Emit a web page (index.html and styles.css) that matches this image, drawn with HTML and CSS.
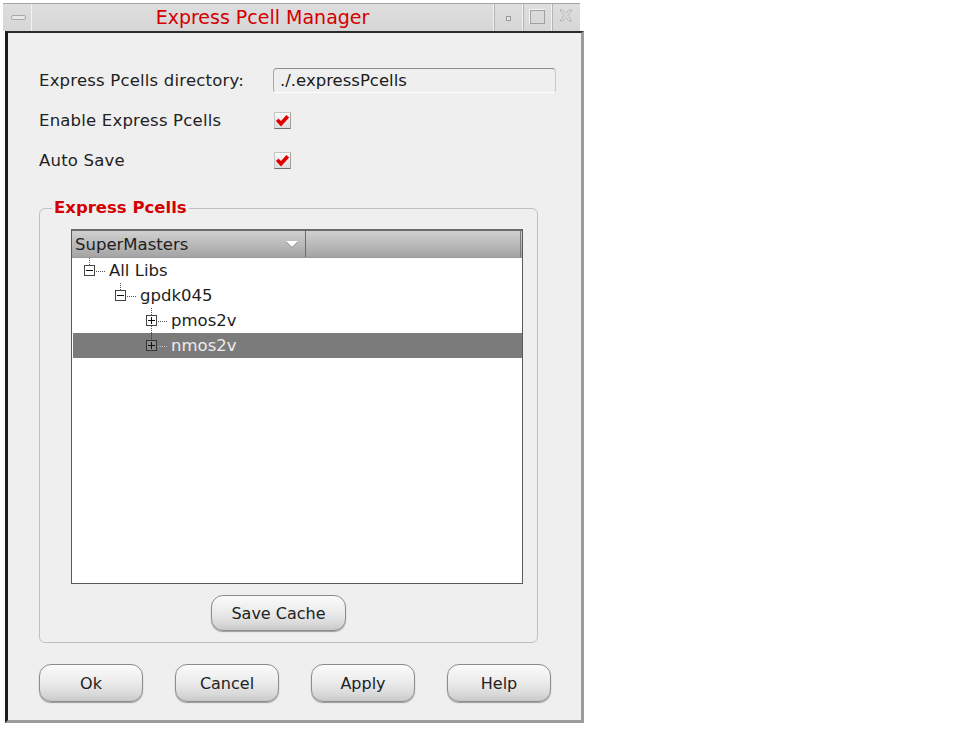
FILE: index.html
```html
<!DOCTYPE html>
<html>
<head>
<meta charset="utf-8">
<title>Express Pcell Manager</title>
<link rel="stylesheet" href="styles.css">
</head>
<body>
<div class="window">
  <div class="titlebar">
    <div class="tb-btn tb-menu">
      <svg width="28" height="27" viewBox="0 0 28 27"><rect x="8.5" y="15.5" width="14" height="4" rx="1.5" fill="#e8e8e8" stroke="#a8a8a8"/></svg>
    </div>
    <div class="title">Express Pcell Manager</div>
    <div class="tb-btn">
      <svg width="28" height="27" viewBox="0 0 28 27"><rect x="12.5" y="16.5" width="4" height="4" fill="#e4e4e4" stroke="#999"/></svg>
    </div>
    <div class="tb-btn">
      <svg width="28" height="27" viewBox="0 0 28 27"><rect x="6.5" y="9.5" width="15" height="14" fill="none" stroke="#f6f6f6" stroke-width="1"/><rect x="7.5" y="10.5" width="14" height="13" fill="none" stroke="#a0a0a0" stroke-width="1"/></svg>
    </div>
    <div class="tb-btn tb-last">
      <svg width="28" height="27" viewBox="0 0 28 27"><path d="M8 10 L11 10 L14 13.5 L17 10 L20 10 L16 15.5 L20 21 L17 21 L14 17.5 L11 21 L8 21 L12 15.5 Z" fill="none" stroke="#a8a8a8" stroke-width="1" stroke-dasharray="2 1"/></svg>
    </div>
  </div>
  <div class="client">
    <div class="form">
      <label class="lbl">Express Pcells directory:</label>
      <div class="input">./.expressPcells</div>
      <label class="lbl">Enable Express Pcells</label>
      <span class="check"><svg width="15" height="15" viewBox="0 0 15 15"><path d="M2.2 6.8 L6 10.8 L12.8 3.2" fill="none" stroke="#e00000" stroke-width="3.6" stroke-linejoin="miter"/></svg></span>
      <label class="lbl">Auto Save</label>
      <span class="check"><svg width="15" height="15" viewBox="0 0 15 15"><path d="M2.2 6.8 L6 10.8 L12.8 3.2" fill="none" stroke="#e00000" stroke-width="3.6" stroke-linejoin="miter"/></svg></span>
    </div>
    <fieldset class="group">
      <legend>Express Pcells</legend>
      <div class="tree">
        <div class="tree-header">
          <div class="col col-main">SuperMasters<span class="tri"></span></div>
          <div class="col col-rest"></div>
        </div>
        <div class="tree-body">
          <div class="row l0"><span class="exp minus"></span><span class="txt">All Libs</span></div>
          <div class="row l1"><span class="exp minus"></span><span class="txt">gpdk045</span></div>
          <div class="row l2"><span class="exp plus more"></span><span class="txt">pmos2v</span></div>
          <div class="row l2 selected"><span class="exp plus"></span><span class="txt">nmos2v</span></div>
        </div>
      </div>
      <button class="btn save">Save Cache</button>
    </fieldset>
    <div class="actions">
      <button class="btn">Ok</button>
      <button class="btn">Cancel</button>
      <button class="btn">Apply</button>
      <button class="btn">Help</button>
    </div>
  </div>
</div>
</body>
</html>
```

FILE: styles.css
```css
html, body {
  margin: 0;
  padding: 0;
  background: #ffffff;
}
body {
  font-family: "DejaVu Sans", "Noto Sans", sans-serif;
  color: #222;
}
.window {
  margin-top: 3px;
  width: 584px;
  display: flex;
  flex-direction: column;
}
.titlebar {
  margin-left: 3px;
  width: 577px;
  height: 28px;
  box-sizing: border-box;
  border-top: 1px solid #a4a4a4;
  background: linear-gradient(#dedede, #d6d6d6);
  display: flex;
}
.tb-btn {
  width: 28px;
  height: 27px;
  display: flex;
  align-items: flex-start;
  justify-content: center;
  border-left: 1px solid #f2f2f2;
  box-shadow: inset 1px 0 0 #b4b4b4;
  margin-top: 0;
}
.tb-btn svg { display: block; margin-top: -4px; }
.tb-menu {
  border-left: none;
  box-shadow: none;
  border-right: 1px solid #f2f2f2;
}
.title {
  flex: 1;
  text-align: center;
  color: #d40000;
  font-size: 19px;
  line-height: 27px;
  padding-top: 0;
}
.client {
  margin-left: 5px;
  width: 579px;
  height: 692px;
  box-sizing: border-box;
  border-top: 2px solid #2a2a2a;
  border-left: 3px solid #1c1c1c;
  border-right: 3px solid #9c9c9c;
  border-bottom: 3px solid #9c9c9c;
  background: #efefef;
  display: flex;
  flex-direction: column;
  align-items: flex-start;
}
.form {
  margin-top: 27px;
  margin-left: 31px;
  display: grid;
  grid-template-columns: 234px 283px;
  grid-auto-rows: 40px;
  align-items: center;
  font-size: 16.5px;
  letter-spacing: 0.2px;
}
.lbl {
  color: #222;
}
.input {
  height: 25px;
  box-sizing: border-box;
  border: 1px solid #c8c8c8;
  border-top-color: #8e8e8e;
  border-left-color: #a8a8a8;
  border-bottom-color: #ffffff;
  border-radius: 4px;
  background: #efefef;
  padding-left: 6px;
  line-height: 24px;
  color: #1a1a1a;
  letter-spacing: 0;
}
.check {
  width: 17px;
  height: 17px;
  margin-left: 1px;
  box-sizing: border-box;
  border: 1px solid #c4c4c4;
  border-bottom-color: #6e6e6e;
  border-right-color: #a0a0a0;
  background: linear-gradient(#fafafa, #dcdcdc);
  display: flex;
  align-items: center;
  justify-content: center;
}
.check svg { display: block; }
.group {
  margin: 18px 0 0 31px;
  width: 499px;
  box-sizing: border-box;
  border: 1px solid #c0c0c0;
  border-radius: 6px;
  padding: 0 0 11px 0;
  display: flex;
  flex-direction: column;
  align-items: flex-start;
}
.group legend {
  margin-left: 12px;
  padding: 0 2px;
  color: #d40000;
  font-weight: bold;
  font-size: 16.5px;
  line-height: 20px;
}
.tree {
  margin: 11px 0 0 31px;
  width: 452px;
  height: 355px;
  box-sizing: border-box;
  border: 1px solid #5a5a5a;
  border-top: 2px solid #6a6a6a;
  background: #ffffff;
  font-size: 16.5px;
}
.tree-header {
  height: 27px;
  display: flex;
  background: linear-gradient(#d0d0d0, #b6b6b6 60%, #a4a4a4);
  border-bottom: 1px solid #9a9a9a;
  box-sizing: border-box;
}
.col {
  height: 100%;
  display: flex;
  align-items: center;
}
.col-main {
  width: 234px;
  padding-left: 3px;
  box-sizing: border-box;
  border-right: 1px solid #6c6c6c;
  justify-content: space-between;
  color: #1e1e1e;
}
.col-rest {
  flex: 1;
  border-right: 1px solid #7a7a7a;
  margin-right: 1px;
}
.tri {
  width: 0;
  height: 0;
  border-left: 6px solid transparent;
  border-right: 6px solid transparent;
  border-top: 6px solid #ffffff;
  margin-right: 7px;
  filter: drop-shadow(0 1px 0 #888);
}
.row {
  height: 25px;
  display: flex;
  align-items: center;
  color: #1e1e1e;
}
.row.l0 { padding-left: 12px; }
.row.l1 { padding-left: 43px; }
.row.l2 { padding-left: 74px; }
.row.selected {
  background: #7b7b7b;
  color: #ececec;
  margin-left: 1px;
}
.row.selected.l2 { padding-left: 73px; }
.exp {
  position: relative;
  width: 11px;
  height: 11px;
  box-sizing: border-box;
  border: 1px solid #444;
  background: #fff;
  margin-right: 14px;
}
.selected .exp {
  background: #8a8a8a;
  border-color: #333;
}
.exp.minus {
  background-image: linear-gradient(#111, #111);
  background-size: 7px 1px;
  background-position: center;
  background-repeat: no-repeat;
}
.exp.plus {
  background-image: linear-gradient(#111, #111), linear-gradient(#111, #111);
  background-size: 7px 1px, 1px 7px;
  background-position: center, center;
  background-repeat: no-repeat;
}
.exp::before {
  content: "";
  position: absolute;
  left: 4px;
  top: -8px;
  height: 7px;
  border-left: 1px dotted #555;
}
.exp.more::after {
  content: "";
  position: absolute;
  left: 4px;
  top: 10px;
  height: 17px;
  border-left: 1px dotted #555;
}
.row .exp + .txt {
  position: relative;
}
.row .exp + .txt::before {
  content: "";
  position: absolute;
  left: -13px;
  top: 50%;
  width: 9px;
  border-top: 1px dotted #555;
}
.selected .exp + .txt::before {
  border-top-color: #bdbdbd;
}
.btn {
  font-family: "DejaVu Sans", "Noto Sans", sans-serif;
  font-size: 16px;
  color: #222;
  border: 1px solid #8c8c8c;
  border-radius: 12px;
  background: linear-gradient(#fbfbfb, #ececec 45%, #dadada 80%, #c8c8c8);
  box-shadow: 0 1px 1px rgba(0, 0, 0, 0.35);
  padding: 0;
  box-sizing: border-box;
}
.save {
  margin: 11px 0 0 171px;
  width: 135px;
  height: 36px;
}
.actions {
  margin: 21px 0 0 31px;
  display: flex;
  gap: 32px;
}
.actions .btn {
  width: 104px;
  height: 38px;
}
```
